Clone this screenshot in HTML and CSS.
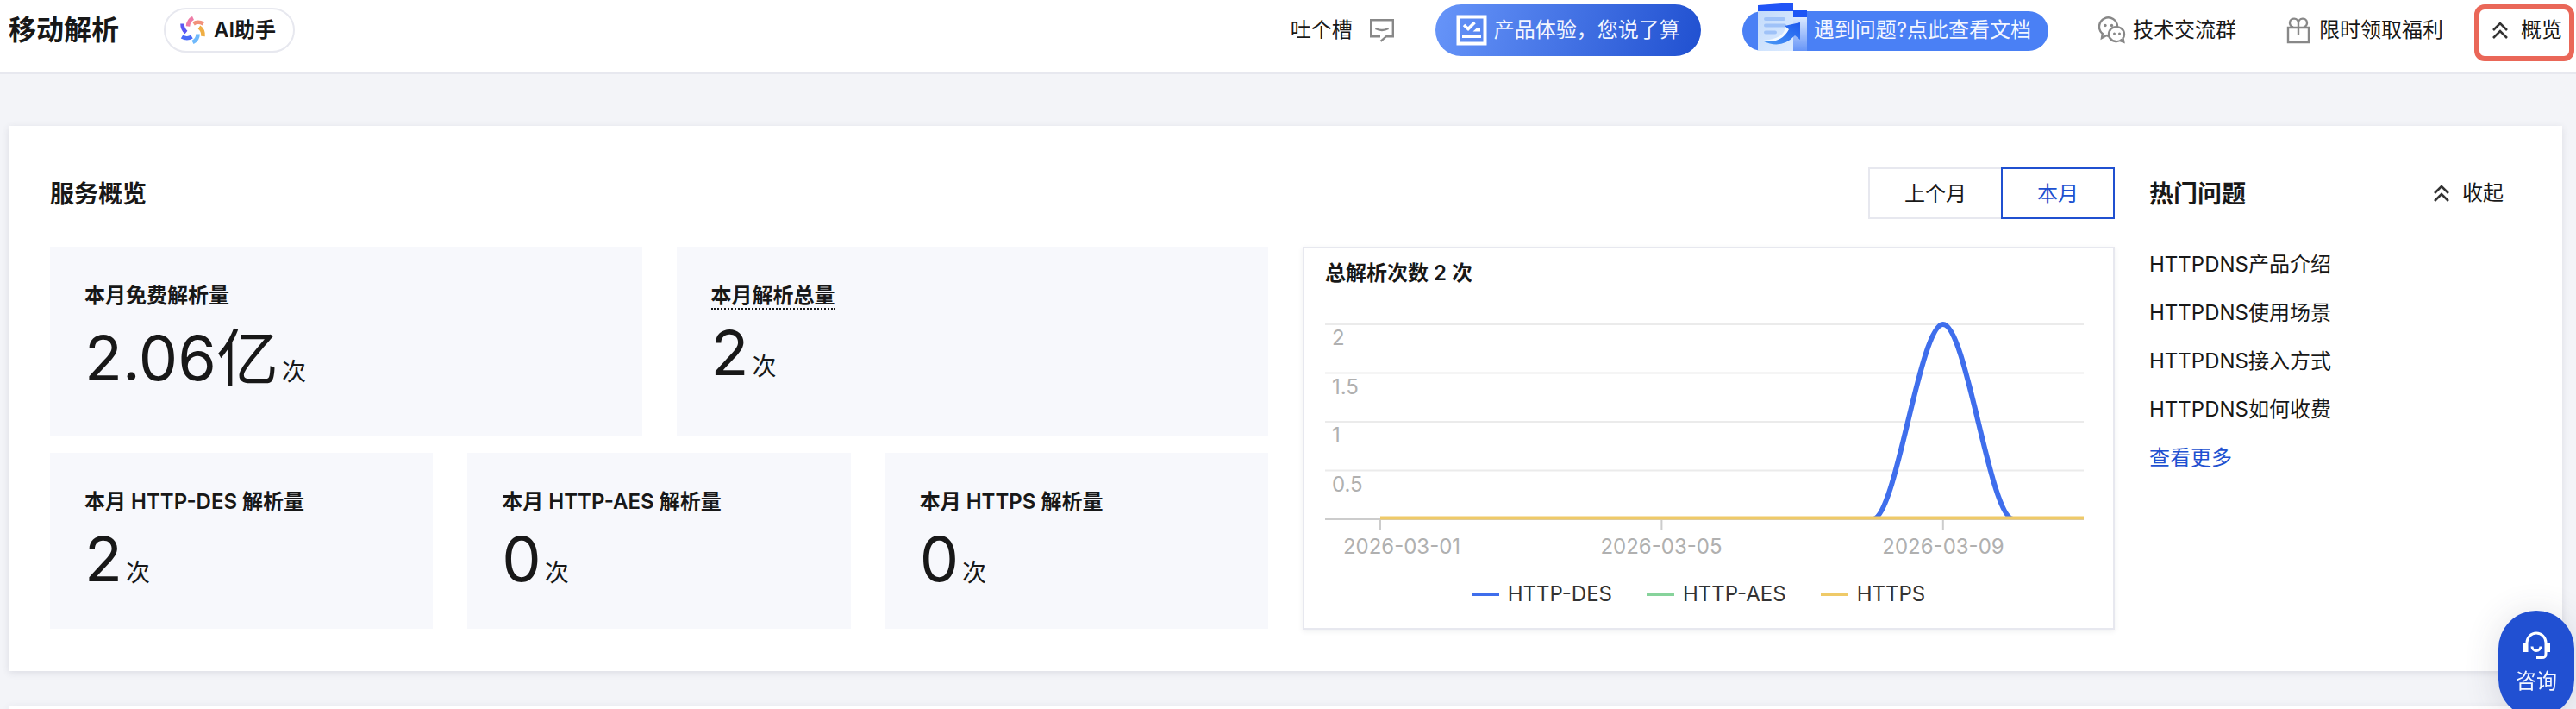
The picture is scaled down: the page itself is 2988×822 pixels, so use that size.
FILE: index.html
```html
<!DOCTYPE html>
<html lang="zh-CN">
<head>
<meta charset="utf-8">
<title>移动解析</title>
<link rel="stylesheet" href="styles.css">
</head>
<body>
<svg class="defs" aria-hidden="true">
  <symbol id="chevrons" viewBox="0 0 20 24">
    <path d="M2 12l8-8 8 8M2 21l8-8 8 8" fill="none" stroke="#333" stroke-width="2.6"/>
  </symbol>
</svg>

<header class="topbar">
  <h1 class="topbar-title">移动解析</h1>
  <button class="ai-button" type="button">
    <svg class="ai-icon" viewBox="0 0 30 32" fill="none" stroke-width="4.6" aria-hidden="true">
      <path d="M15 2Q9.500 4.500 9 11.500" stroke="#ee7ba6"/>
      <path d="M15.500 8.500Q20.500 5 27 8.500" stroke="#f2917a"/>
      <path d="M22 12.500Q27 16 26.500 23" stroke="#efae44"/>
      <path d="M20.500 20.500Q20.500 27 14.500 30" stroke="#6fb9fb"/>
      <path d="M13.500 23.500Q8 27 2 23.500" stroke="#4a6cf8"/>
      <path d="M7 18.500Q2.500 15 2.500 8.500" stroke="#5a55f3"/>
    </svg>
    <span>AI助手</span>
  </button>

  <nav class="topbar-nav">
    <div class="banners">
      <a class="nav-link feedback" href="#">
        <span>吐个槽</span>
        <svg class="feedback-icon" viewBox="0 0 28 28" fill="none" stroke="#888" stroke-width="2.400" aria-hidden="true">
          <path d="M12 21.200H1.200V2.200h25.600v19H19l-6.500 5.600M6.500 12Q14 16 21.500 12"/>
        </svg>
      </a>
      <a class="survey" href="#">
        <svg class="survey-icon" viewBox="0 0 36 36" aria-hidden="true">
          <path d="M2.500 2.500h31v31h-31z" fill="none" stroke="#fff" stroke-width="4"/>
          <path d="M9 12l5 4.500L21.500 9" fill="none" stroke="#fff" stroke-width="3.600"/>
          <path d="M7 23h22v4H7zM19.500 19.500l5-4.500H28v4.500z" fill="#fff"/>
        </svg>
        <span>产品体验，您说了算</span>
      </a>
      <a class="docs" href="#">
        <svg class="docs-icon" viewBox="0 0 58 56" aria-hidden="true">
          <defs>
            <linearGradient id="sheet" x1="0" y1="0" x2="1" y2="1"><stop offset="0" stop-color="#c3dbfb"/><stop offset="1" stop-color="#dcebff"/></linearGradient>
            <linearGradient id="back" x1="0" y1="0" x2="0" y2="1"><stop offset="0" stop-color="#dbe9ff"/><stop offset="1" stop-color="#6795f7"/></linearGradient>
            <linearGradient id="arrow" x1="0" y1="1" x2="1" y2="0"><stop offset="0" stop-color="#4b9bf5"/><stop offset="1" stop-color="#1d58ee"/></linearGradient>
          </defs>
          <path d="M42 9h16v9H42z" fill="#1d55f5"/>
          <path d="M42 17h16v39H42z" fill="url(#back)"/>
          <path d="M1 3L42 0v10H1z" fill="#2154f6"/>
          <path d="M1 10h41v46H1z" fill="url(#sheet)"/>
          <path d="M10 19h21M10 26.500h22M10 34.500h11" stroke="#9fc2f8" stroke-width="4" stroke-linecap="round"/>
          <path d="M7 44Q32 42 33 28l5 4Q28 50 7 44z" fill="#f4faff"/>
          <path d="M7 44.500Q28 48 37 31l-5-4 18-4v20l-6-5Q28 55 7 44.500z" fill="url(#arrow)"/>
        </svg>
        <span>遇到问题?点此查看文档</span>
      </a>
    </div>
    <div class="links">
      <a class="nav-link" href="#">
        <svg class="nav-icon" viewBox="0 0 32 32" fill="none" stroke="#888" stroke-width="2.400" aria-hidden="true">
          <path d="M12 23.200L9.500 22 4 25l.8-5A10.500 10.500 0 1 1 22 12"/>
          <path d="M27.500 26.500A9 8.500 0 1 1 30 20.500q0 3-1.500 4.700l.8 4.500-4-1.500"/>
          <g fill="#888" stroke="none"><circle cx="8" cy="10.500" r="1.700"/><circle cx="15.500" cy="10.500" r="1.700"/><circle cx="18.500" cy="20" r="1.500"/><circle cx="24.500" cy="20" r="1.500"/></g>
        </svg>
        <span>技术交流群</span>
      </a>
      <a class="nav-link" href="#">
        <svg class="nav-icon" viewBox="0 0 32 32" fill="none" stroke="#888" stroke-width="2.400" aria-hidden="true">
          <path d="M4 13h24v17H4zM16 12v10"/>
          <path d="M10 12.500A5 5 0 1 1 16 7.500v5M22 12.500A5 5 0 1 0 16 7.500"/>
        </svg>
        <span>限时领取福利</span>
      </a>
      <button class="fold-button marked" type="button">
        <svg class="chevrons" aria-hidden="true"><use href="#chevrons"/></svg>
        <span>概览</span>
      </button>
    </div>
  </nav>
</header>

<main class="page">
  <section class="card overview">
    <div class="overview-head">
      <h2 class="section-title">服务概览</h2>
      <div class="segmented">
        <button class="segment" type="button">上个月</button>
        <button class="segment segment-active" type="button" aria-pressed="true">本月</button>
      </div>
    </div>
    <div class="faq-head">
      <h2 class="section-title">热门问题</h2>
      <button class="fold-button" type="button">
        <svg class="chevrons" aria-hidden="true"><use href="#chevrons"/></svg>
        <span>收起</span>
      </button>
    </div>

    <div class="stats">
      <div class="stat stat-wide">
        <h3 class="stat-label">本月免费解析量</h3>
        <p class="stat-value"><span class="number number-cjk">2.06亿</span> 次</p>
      </div>
      <div class="stat stat-wide">
        <h3 class="stat-label"><span class="hinted">本月解析总量</span></h3>
        <p class="stat-value"><span class="number">2</span> 次</p>
      </div>
      <div class="stat">
        <h3 class="stat-label">本月 HTTP-DES 解析量</h3>
        <p class="stat-value"><span class="number">2</span> 次</p>
      </div>
      <div class="stat">
        <h3 class="stat-label">本月 HTTP-AES 解析量</h3>
        <p class="stat-value"><span class="number">0</span> 次</p>
      </div>
      <div class="stat">
        <h3 class="stat-label">本月 HTTPS 解析量</h3>
        <p class="stat-value"><span class="number">0</span> 次</p>
      </div>
    </div>

    <div class="chart">
      <h3 class="chart-title">总解析次数 2 次</h3>
      <svg class="chart-plot" viewBox="0 0 890 300" role="img" aria-label="总解析次数">
        <defs>
          <clipPath id="plot-area"><path d="M0 0h890v252H0z"/></clipPath>
        </defs>
        <path d="M0 26h880M0 82.500h880M0 139h880M0 195.500h880" stroke="#ebebeb" stroke-width="2"/>
        <path d="M0 252h880" stroke="#ccc" stroke-width="2"/>
        <path d="M64 252v12M390.400 252v12M716.800 252v12" stroke="#ccc" stroke-width="2"/>
        <path d="M635.200 252C662.400 252 689.600 26 716.800 26S771.200 252 798.400 252" clip-path="url(#plot-area)" fill="none" stroke="#3f6eec" stroke-width="6"/>
        <path d="M64 250.500h816" stroke="#efca68" stroke-width="4"/>
        <g class="axis-text">
          <text x="8" y="50">2</text>
          <text x="8" y="107">1.5</text>
          <text x="8" y="163">1</text>
          <text x="8" y="220">0.5</text>
          <g text-anchor="middle">
            <text x="89" y="292">2026-03-01</text>
            <text x="390" y="292">2026-03-05</text>
            <text x="717" y="292">2026-03-09</text>
          </g>
        </g>
      </svg>
      <ul class="legend">
        <li class="legend-item legend-des">HTTP-DES</li>
        <li class="legend-item legend-aes">HTTP-AES</li>
        <li class="legend-item legend-https">HTTPS</li>
      </ul>
    </div>

    <ul class="faq">
      <li><a href="#">HTTPDNS产品介绍</a></li>
      <li><a href="#">HTTPDNS使用场景</a></li>
      <li><a href="#">HTTPDNS接入方式</a></li>
      <li><a href="#">HTTPDNS如何收费</a></li>
      <li><a class="more" href="#">查看更多</a></li>
    </ul>
  </section>
  <section class="card next-card"></section>
</main>

<button class="consult" type="button">
  <svg class="consult-icon" viewBox="0 0 32 32" aria-hidden="true">
    <path d="M5 14v-1a11 11 0 0 1 22 0v13q0 4.500-4.500 4.500H16" fill="none" stroke="#fff" stroke-width="3"/>
    <path d="M0 13h6.500v11H0zM26 13h6v11h-6z" fill="#fff"/>
    <path d="M11 17.500a5 5 0 0 0 10 0" fill="none" stroke="#fff" stroke-width="3"/>
  </svg>
  <span>咨询</span>
</button>
</body>
</html>
```
FILE: styles.css
```css
* {
  box-sizing: border-box;
}

body {
  display: flex;
  flex-direction: column;
  margin: 0;
  height: 100vh;
  overflow: hidden;
  background: #f3f4f8;
  color: #181818;
  font: 24px/34px Inter, "Noto Sans CJK SC", sans-serif;
}

h1, h2, h3, p, ul {
  margin: 0;
  padding: 0;
}

ul {
  list-style: none;
}

a {
  color: inherit;
  text-decoration: none;
}

button {
  margin: 0;
  padding: 0;
  border: 0;
  background: none;
  color: inherit;
  font: inherit;
  white-space: nowrap;
}

svg {
  display: block;
  flex: none;
}

.defs {
  position: absolute;
  width: 0;
  height: 0;
}

/* Top bar */
.topbar {
  display: flex;
  flex: none;
  align-items: center;
  height: 86px;
  padding: 0 16px 15px 10px;
  border-bottom: 2px solid #e7e8ef;
  background: #fff;
  white-space: nowrap;
}

.topbar-title {
  font-size: 32px;
  line-height: 48px;
  font-weight: 700;
}

.ai-button {
  display: flex;
  align-items: center;
  gap: 9px;
  height: 52px;
  margin-left: 52px;
  padding: 0 20px 0 17px;
  border: 2px solid #e7e8ef;
  border-radius: 26px;
  font-weight: 600;
}

.ai-icon {
  width: 30px;
  height: 32px;
}

.topbar-nav,
.banners,
.links,
.nav-link,
.fold-button,
.survey,
.docs {
  display: flex;
  align-items: center;
}

.topbar-nav {
  gap: 58px;
  margin-left: auto;
}

.banners {
  gap: 48px;
}

.links {
  gap: 56px;
}

.nav-link {
  gap: 8px;
}

.nav-icon {
  width: 32px;
  height: 32px;
}

.feedback {
  gap: 20px;
}

.feedback-icon {
  width: 28px;
  height: 28px;
}

.survey {
  gap: 8px;
  height: 60px;
  padding: 0 24px;
  border-radius: 30px;
  background: linear-gradient(105deg, #6795f9, #2050d0);
  color: #f2f6ff;
}

.survey-icon {
  width: 36px;
  height: 36px;
}

/* The picture is taller than the pill and rises above its top edge */
.docs {
  align-items: flex-end;
  gap: 8px;
  height: 46px;
  margin-top: 3px;
  padding: 0 20px 0 17px;
  border-radius: 23px;
  background: #4a80f5;
  color: #f2f6ff;
}

.docs span {
  align-self: center;
  padding-bottom: 3px;
}

.docs-icon {
  width: 58px;
  height: 56px;
}

.fold-button {
  position: relative;
  gap: 14px;
}

.chevrons {
  width: 20px;
  height: 24px;
}

.marked::after {
  content: "";
  position: absolute;
  inset: -13px -14px -19px -20px;
  border: 6px solid #ea6758;
  border-radius: 12px;
}

/* Overview card */
.page {
  display: flex;
  flex: 1;
  flex-direction: column;
  gap: 40px;
  min-height: 0;
  padding: 60px 16px 0 10px;
}

.card {
  background: #fff;
  box-shadow: 0 2px 8px rgba(54, 58, 80, 0.12);
}

.overview {
  display: grid;
  flex: none;
  grid-template-columns: 3fr 2fr 431px;
  column-gap: 40px;
  row-gap: 32px;
  padding: 48px;
}

.overview-head {
  grid-column: span 2;
  display: flex;
  align-items: center;
  justify-content: space-between;
}

.faq-head {
  display: flex;
  align-items: center;
  justify-content: space-between;
  padding-right: 20px;
}

.section-title {
  padding-top: 2px;
  font-size: 28px;
  line-height: 40px;
  font-weight: 700;
}

.segmented {
  display: flex;
}

.segment {
  height: 60px;
  padding: 2px 40px 0;
  border: 2px solid #e7e8ef;
  border-right: 0;
}

.segment-active {
  border: 2px solid #2050d0;
  color: #2050d0;
}

.stats {
  display: grid;
  grid-template-columns: repeat(6, 1fr);
  grid-template-rows: 219px 204px;
  gap: 20px 40px;
}

.stat {
  grid-column: span 2;
  padding: 40px;
  background: #f7f8fc;
}

.stat-wide {
  grid-column: span 3;
}

.stat-label {
  font-size: 24px;
  line-height: 34px;
  font-weight: 600;
}

.hinted {
  border-bottom: 2px dotted #181818;
}

.stat-value {
  display: flex;
  align-items: baseline;
  gap: 4px;
  font-size: 28px;
}

.number {
  font-size: 72px;
  line-height: 98px;
}

.number-cjk {
  line-height: 110px;
}

/* Chart */
.chart {
  padding: 12px 24px 22px;
  border: 2px solid #e7e8ef;
  box-shadow: 0 2px 6px rgba(54, 58, 80, 0.08);
}

.chart-title {
  font-size: 24px;
  line-height: 34px;
  font-weight: 600;
}

.chart-plot {
  width: 100%;
  margin: 16px 0 22px;
}

.axis-text {
  fill: #b0b0b0;
  font-size: 24px;
}

.legend {
  display: flex;
  justify-content: center;
  gap: 40px;
  padding-right: 24px;
  color: #333;
}

.legend-item {
  display: flex;
  align-items: center;
  gap: 10px;
}

.legend-item::before {
  content: "";
  width: 32px;
  height: 4px;
  background: currentColor;
}

.legend-des::before {
  background: #3f6eec;
}

.legend-aes::before {
  background: #87d39b;
}

.legend-https::before {
  background: #efca68;
}

/* Questions */
.faq {
  display: flex;
  flex-direction: column;
  gap: 22px;
  padding-top: 4px;
}

.more {
  color: #2050d0;
}

.next-card {
  flex: 1;
}

/* Floating contact button */
.consult {
  position: fixed;
  right: 2px;
  bottom: -10px;
  display: flex;
  flex-direction: column;
  align-items: center;
  gap: 9px;
  width: 88px;
  height: 124px;
  padding-top: 24px;
  border-radius: 44px;
  background: #2150d2;
  box-shadow: 0 4px 40px rgba(54, 58, 80, 0.16);
  color: #f2f6ff;
}

.consult-icon {
  width: 32px;
  height: 32px;
}
```
